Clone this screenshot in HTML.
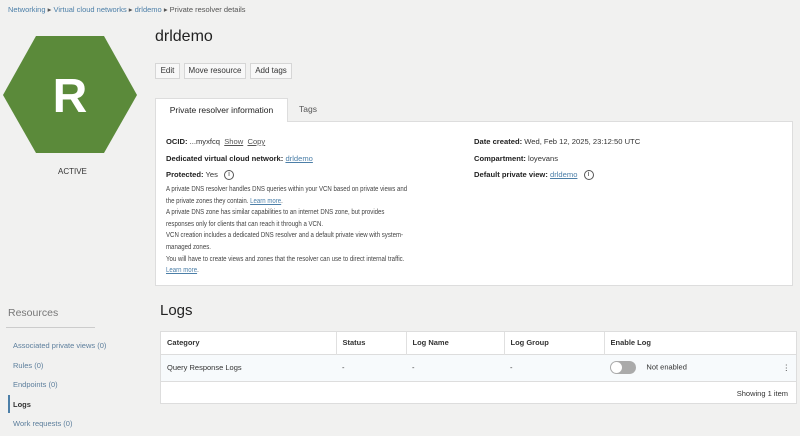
<!DOCTYPE html>
<html><head><style>
*{margin:0;padding:0;box-sizing:border-box}
body{width:800px;height:436px;background:#f1f1f0;font-family:"Liberation Sans",sans-serif;color:#333;position:relative;overflow:hidden;font-size:8px}
.a{position:absolute;white-space:nowrap}
.lk{color:#4c7fa8;text-decoration:underline}
.u{text-decoration:underline;color:#555}
b{font-weight:bold;color:#222}
.btn{position:absolute;top:63px;height:16px;border:1px solid #d6d6d6;background:#f8f8f8;font-size:8px;line-height:14px;text-align:center;color:#333}
.info{display:inline-block;width:10px;height:10px;border:1px solid #555;border-radius:50%;font-size:7px;line-height:8px;text-align:center;vertical-align:middle;margin-left:4px}
.side{position:absolute;left:13px;color:#5c7e9c;font-size:7.5px}
td,th{font-size:7.5px;text-align:left;padding-left:6px;border-right:1px solid #e0e0e0}
</style></head><body>
<div class="a" style="left:8px;top:5px;font-size:7.5px;color:#4c7fa8">Networking <span style="color:#555">▸</span> Virtual cloud networks <span style="color:#555">▸</span> drldemo <span style="color:#555">▸</span> <span style="color:#555">Private resolver details</span></div>
<svg class="a" style="left:0;top:0" width="150" height="160"><polygon points="3,95 36,36 104,36 137,95 104,153 36,153" fill="#5b8a3a"/><text x="70" y="112" text-anchor="middle" font-family="Liberation Sans" font-weight="bold" font-size="48" fill="#fff">R</text></svg>
<div class="a" style="left:58px;top:167px;font-size:8px;color:#333">ACTIVE</div>
<div class="a" style="left:155px;top:28px;font-size:16px;color:#222">drldemo</div>
<div class="btn" style="left:155px;width:25px">Edit</div>
<div class="btn" style="left:184px;width:62px">Move resource</div>
<div class="btn" style="left:250px;width:42px">Add tags</div>
<div class="a" style="left:155px;top:98px;width:133px;height:24px;background:#fff;border:1px solid #ddd;border-bottom:none;font-size:8.5px;line-height:22px;text-align:center;color:#222;z-index:2">Private resolver information</div>
<div class="a" style="left:299px;top:104px;font-size:8.5px;color:#555">Tags</div>
<div class="a" style="left:155px;top:121px;width:638px;height:165px;background:#fff;border:1px solid #ddd"></div>
<div class="a" style="left:166px;top:134px;line-height:16.5px;font-size:7.6px"><b>OCID:</b> ...myxfcq &nbsp;<span class="u">Show</span> &nbsp;<span class="u">Copy</span><br><b>Dedicated virtual cloud network:</b> <span class="lk">drldemo</span><br><b>Protected:</b> Yes <span class="info">i</span></div>
<div class="a" style="left:166px;top:183px;line-height:11.6px;color:#444;font-size:7.6px;transform:scaleX(0.8);transform-origin:0 0">A private DNS resolver handles DNS queries within your VCN based on private views and<br>the private zones they contain. <span class="lk">Learn more</span>.<br>A private DNS zone has similar capabilities to an internet DNS zone, but provides<br>responses only for clients that can reach it through a VCN.<br>VCN creation includes a dedicated DNS resolver and a default private view with system-<br>managed zones.<br>You will have to create views and zones that the resolver can use to direct internal traffic.<br><span class="lk">Learn more</span>.</div>
<div class="a" style="left:474px;top:134px;line-height:16.5px;font-size:7.6px"><b>Date created:</b> Wed, Feb 12, 2025, 23:12:50 UTC<br><b>Compartment:</b> loyevans<br><b>Default private view:</b> <span class="lk">drldemo</span> <span class="info">i</span></div>
<div class="a" style="left:8px;top:307px;font-size:10.5px;color:#777">Resources</div>
<div class="a" style="left:6px;top:327px;width:89px;height:1px;background:#ccc"></div>
<div class="side" style="top:341px">Associated private views (0)</div>
<div class="side" style="top:361px">Rules (0)</div>
<div class="side" style="top:380px">Endpoints (0)</div>
<div class="a" style="left:8px;top:395px;width:2px;height:18px;background:#4c7fa8"></div>
<div class="side" style="top:400px;color:#333;font-weight:bold">Logs</div>
<div class="side" style="top:419px">Work requests (0)</div>
<div class="a" style="left:160px;top:302px;font-size:15px;color:#222">Logs</div>
<div class="a" style="left:160px;top:331px;width:637px;height:73px;background:#fff;border:1px solid #ddd">
<table style="border-collapse:collapse;width:100%">
<tr style="height:22px;border-bottom:1px solid #ddd"><th style="width:175px;font-weight:bold">Category</th><th style="width:70px">Status</th><th style="width:98px">Log Name</th><th style="width:100px">Log Group</th><th style="border:none">Enable Log</th></tr>
<tr style="height:27px;border-bottom:1px solid #ddd;background:#f7fafc"><td style="border:none">Query Response Logs</td><td style="border:none">-</td><td style="border:none">-</td><td style="border:none">-</td><td style="border:none;position:relative"><span style="display:inline-block;width:26px;height:13px;border-radius:7px;background:#aaa;vertical-align:middle;position:relative"><span style="position:absolute;left:1px;top:1px;width:11px;height:11px;border-radius:50%;background:#fff"></span></span> &nbsp;&nbsp;&nbsp;&nbsp;Not enabled<span style="position:absolute;right:6px;top:8px">⋮</span></td></tr>
</table>
<div class="a" style="right:8px;top:57px;font-size:7.5px">Showing 1 item</div>
</div>
</body></html>
